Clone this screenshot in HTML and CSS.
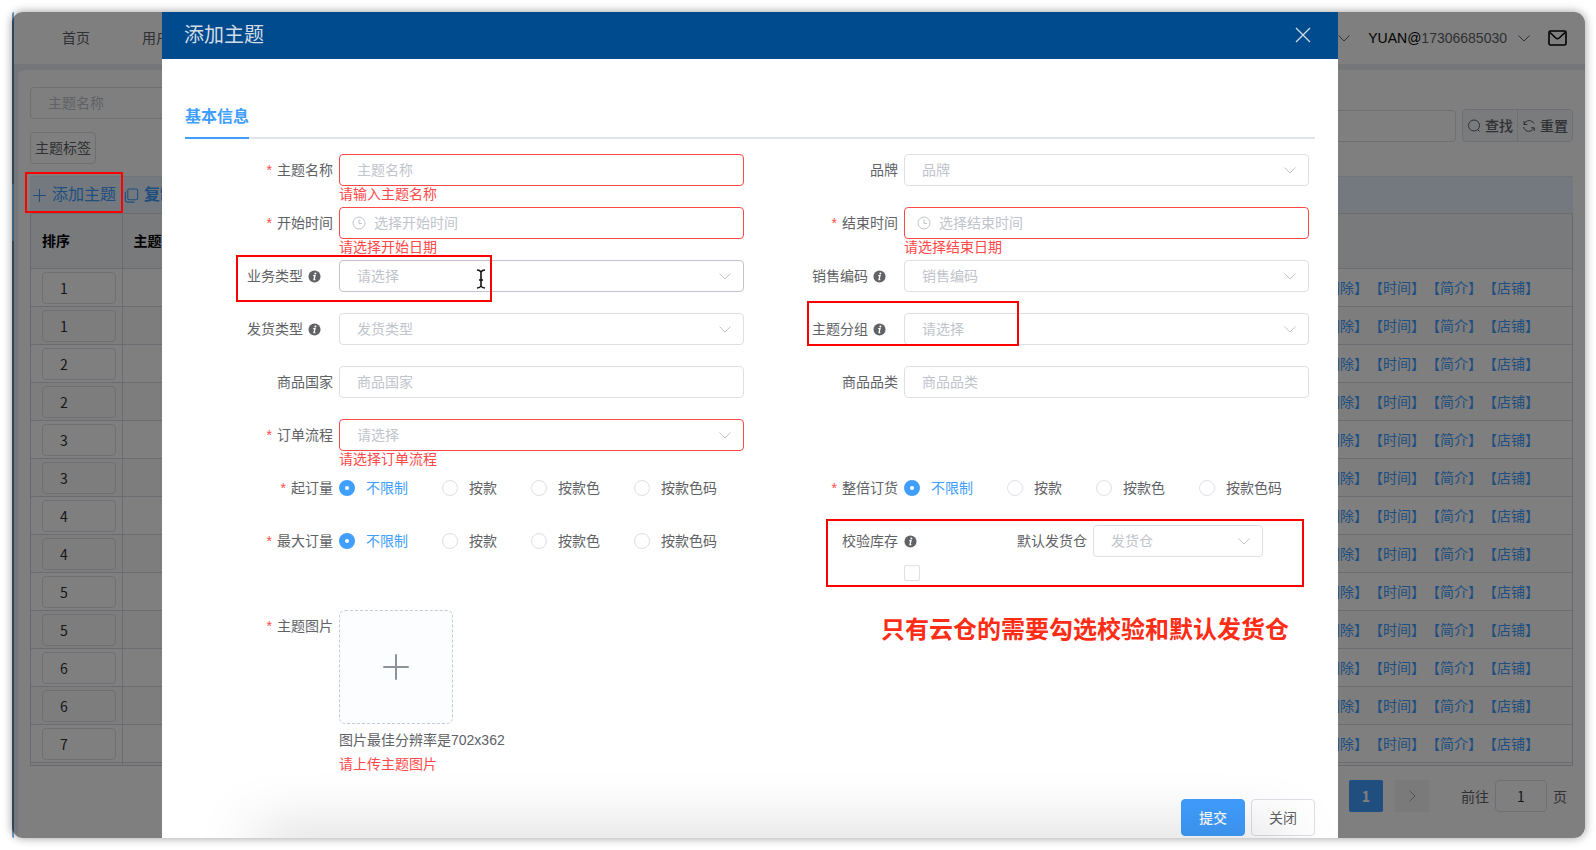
FILE: index.html
```html
<!DOCTYPE html>
<html lang="zh-CN">
<head>
<meta charset="utf-8">
<title>添加主题</title>
<link rel="stylesheet" href="styles.css">
</head>
<body>
<svg class="sprite" aria-hidden="true">
  <symbol id="chevron" viewBox="0 0 14 14"><path d="M1.5 4.5 7 10l5.500-5.500" fill="none" stroke="currentColor"/></symbol>
  <symbol id="clock" viewBox="0 0 14 14"><circle cx="7" cy="7" r="6" fill="none" stroke="currentColor"/><path d="M7 3.500V7.500h3" fill="none" stroke="currentColor"/></symbol>
  <symbol id="info" viewBox="0 0 14 14"><circle cx="7" cy="7" r="6.500" fill="currentColor"/><circle cx="7.900" cy="3.700" r="1.100" fill="#fff"/><path d="M5.600 6h1.900l-1 4.300h1.400" fill="none" stroke="#fff" stroke-width="1.400"/></symbol>
  <symbol id="plus" viewBox="0 0 26 26"><path d="M13 1v24M1 13h24" fill="none" stroke="currentColor" stroke-width="2" stroke-linecap="round"/></symbol>
</svg>
<div class="window">
  <div class="sidebar"><span class="sidebar-active"></span></div>
  <div class="app">
    <header class="topbar">
      <nav class="nav"><a href="#">首页</a><a href="#">用户</a></nav>
      <div class="account">
        <svg class="chev"><use href="#chevron"/></svg>
        <span class="user"><b>YUAN@</b>17306685030</span>
        <svg class="chev"><use href="#chevron"/></svg>
        <svg class="mail" viewBox="0 0 19 16"><rect x="1" y="1" width="17" height="14" rx="1.500" fill="none" stroke="currentColor" stroke-width="1.600"/><path d="M2 2.500 7.800 8q1.700 1.400 3.400 0L17 2.500" fill="none" stroke="currentColor" stroke-width="1.600"/></svg>
      </div>
    </header>
    <main class="panel">
      <div class="search">
        <div class="search-left">
          <input class="input" type="text" placeholder="主题名称" aria-label="主题名称">
          <button class="tag" type="button">主题标签</button>
        </div>
        <input class="input search-mid" type="text" aria-label="筛选">
        <div class="search-buttons">
          <button type="button"><svg viewBox="0 0 14 14"><circle cx="7" cy="6.500" r="5.500" fill="none" stroke="currentColor"/><path d="m10.500 10.500 2 2" stroke="currentColor"/></svg>查找</button><button type="button"><svg viewBox="0 0 14 14"><path d="M2 5.500a5.300 5.300 0 0 1 9-2.300l1 1.300M1.500 8l1.300 2.500a5.300 5.300 0 0 0 9-1.700M2 2v3.500h3.300M12.300 12V8.800H9" fill="none" stroke="currentColor"/></svg>重置</button>
        </div>
      </div>
      <div class="toolbar">
        <button type="button"><svg viewBox="0 0 14 14"><path d="M7 1v12M1 7h12" stroke="currentColor"/></svg>添加主题</button>
        <button type="button"><svg viewBox="0 0 16 16"><rect x="4" y="1" width="10.500" height="11.500" rx="1.500" fill="none" stroke="currentColor" stroke-width="1.200"/><path d="M1.500 4v9q0 2 2 2H11" fill="none" stroke="currentColor" stroke-width="1.200"/></svg><b>复制</b></button>
        <span class="mark mark-add"></span>
      </div>
      <div class="table-wrap">
        <table>
          <thead><tr><th class="sort">排序</th><th>主题</th><th class="ops"></th></tr></thead>
          <tbody>
            <tr><td><input aria-label="排序" value="1"></td><td></td><td class="ops"><a href="#">【删除】</a><a href="#">【时间】</a><a href="#">【简介】</a><a href="#">【店铺】</a></td></tr>
            <tr><td><input aria-label="排序" value="1"></td><td></td><td class="ops"><a href="#">【删除】</a><a href="#">【时间】</a><a href="#">【简介】</a><a href="#">【店铺】</a></td></tr>
            <tr><td><input aria-label="排序" value="2"></td><td></td><td class="ops"><a href="#">【删除】</a><a href="#">【时间】</a><a href="#">【简介】</a><a href="#">【店铺】</a></td></tr>
            <tr><td><input aria-label="排序" value="2"></td><td></td><td class="ops"><a href="#">【删除】</a><a href="#">【时间】</a><a href="#">【简介】</a><a href="#">【店铺】</a></td></tr>
            <tr><td><input aria-label="排序" value="3"></td><td></td><td class="ops"><a href="#">【删除】</a><a href="#">【时间】</a><a href="#">【简介】</a><a href="#">【店铺】</a></td></tr>
            <tr><td><input aria-label="排序" value="3"></td><td></td><td class="ops"><a href="#">【删除】</a><a href="#">【时间】</a><a href="#">【简介】</a><a href="#">【店铺】</a></td></tr>
            <tr><td><input aria-label="排序" value="4"></td><td></td><td class="ops"><a href="#">【删除】</a><a href="#">【时间】</a><a href="#">【简介】</a><a href="#">【店铺】</a></td></tr>
            <tr><td><input aria-label="排序" value="4"></td><td></td><td class="ops"><a href="#">【删除】</a><a href="#">【时间】</a><a href="#">【简介】</a><a href="#">【店铺】</a></td></tr>
            <tr><td><input aria-label="排序" value="5"></td><td></td><td class="ops"><a href="#">【删除】</a><a href="#">【时间】</a><a href="#">【简介】</a><a href="#">【店铺】</a></td></tr>
            <tr><td><input aria-label="排序" value="5"></td><td></td><td class="ops"><a href="#">【删除】</a><a href="#">【时间】</a><a href="#">【简介】</a><a href="#">【店铺】</a></td></tr>
            <tr><td><input aria-label="排序" value="6"></td><td></td><td class="ops"><a href="#">【删除】</a><a href="#">【时间】</a><a href="#">【简介】</a><a href="#">【店铺】</a></td></tr>
            <tr><td><input aria-label="排序" value="6"></td><td></td><td class="ops"><a href="#">【删除】</a><a href="#">【时间】</a><a href="#">【简介】</a><a href="#">【店铺】</a></td></tr>
            <tr><td><input aria-label="排序" value="7"></td><td></td><td class="ops"><a href="#">【删除】</a><a href="#">【时间】</a><a href="#">【简介】</a><a href="#">【店铺】</a></td></tr>
            <tr><td><input aria-label="排序"></td><td></td><td class="ops"></td></tr>
          </tbody>
        </table>
      </div>
      <div class="pager">
        <button class="page current" type="button">1</button>
        <button class="page next" type="button" aria-label="下一页"><svg viewBox="0 0 14 14"><path d="m4.500 1.500 5.500 5.500-5.500 5.500" fill="none" stroke="currentColor"/></svg></button>
        <label class="jump">前往<input type="text" value="1">页</label>
      </div>
    </main>
  </div>

  <div class="overlay">
    <section class="dialog" role="dialog" aria-label="添加主题">
      <header class="dialog-head">
        <h1>添加主题</h1>
        <button type="button" aria-label="关闭对话框"><svg viewBox="0 0 16 16"><path d="m1 1 14 14M15 1 1 15" stroke="currentColor" stroke-width="1.300"/></svg></button>
      </header>
      <div class="dialog-body">
        <div class="tabs"><button class="tab" type="button">基本信息</button></div>
        <form class="form">
          <div class="item">
            <label class="label required" for="name">主题名称</label>
            <div class="field invalid"><input class="input" id="name" type="text" placeholder="主题名称"><p class="error">请输入主题名称</p></div>
          </div>
          <div class="item">
            <label class="label" for="brand">品牌</label>
            <div class="field"><div class="select"><select id="brand"><option>品牌</option></select><svg><use href="#chevron"/></svg></div></div>
          </div>
          <div class="item">
            <label class="label required" for="start">开始时间</label>
            <div class="field invalid"><div class="date"><svg><use href="#clock"/></svg><input class="input" id="start" type="text" placeholder="选择开始时间"></div><p class="error">请选择开始日期</p></div>
          </div>
          <div class="item">
            <label class="label required" for="end">结束时间</label>
            <div class="field invalid"><div class="date"><svg><use href="#clock"/></svg><input class="input" id="end" type="text" placeholder="选择结束时间"></div><p class="error">请选择结束日期</p></div>
          </div>
          <div class="item">
            <label class="label hinted" for="biz">业务类型<svg class="info"><use href="#info"/></svg></label>
            <div class="field"><div class="select hover"><select id="biz"><option>请选择</option></select><svg><use href="#chevron"/></svg></div></div>
            <span class="mark mark-biz"></span>
            <svg class="cursor" viewBox="0 0 10 20"><path d="M1 1q3 0 4 2 1-2 4-2M1 19q3 0 4-2 1 2 4 2M5 3v14M3 11h4" fill="none" stroke="#111" stroke-width="1.600"/></svg>
          </div>
          <div class="item">
            <label class="label hinted" for="code">销售编码<svg class="info"><use href="#info"/></svg></label>
            <div class="field"><div class="select"><select id="code"><option>销售编码</option></select><svg><use href="#chevron"/></svg></div></div>
          </div>
          <div class="item">
            <label class="label hinted" for="ship">发货类型<svg class="info"><use href="#info"/></svg></label>
            <div class="field"><div class="select"><select id="ship"><option>发货类型</option></select><svg><use href="#chevron"/></svg></div></div>
          </div>
          <div class="item">
            <label class="label hinted" for="group">主题分组<svg class="info"><use href="#info"/></svg></label>
            <div class="field"><div class="select"><select id="group"><option>请选择</option></select><svg><use href="#chevron"/></svg></div></div>
            <span class="mark mark-group"></span>
          </div>
          <div class="item">
            <label class="label" for="country">商品国家</label>
            <div class="field"><input class="input" id="country" type="text" placeholder="商品国家"></div>
          </div>
          <div class="item">
            <label class="label" for="category">商品品类</label>
            <div class="field"><input class="input" id="category" type="text" placeholder="商品品类"></div>
          </div>
          <div class="item first-col">
            <label class="label required" for="flow">订单流程</label>
            <div class="field invalid"><div class="select"><select id="flow"><option>请选择</option></select><svg><use href="#chevron"/></svg></div><p class="error">请选择订单流程</p></div>
          </div>
          <div class="item first-col">
            <span class="label required">起订量</span>
            <div class="radios">
              <label><input type="radio" name="min" checked><span>不限制</span></label>
              <label><input type="radio" name="min"><span>按款</span></label>
              <label><input type="radio" name="min"><span>按款色</span></label>
              <label><input type="radio" name="min"><span>按款色码</span></label>
            </div>
          </div>
          <div class="item">
            <span class="label required">整倍订货</span>
            <div class="radios">
              <label><input type="radio" name="mult" checked><span>不限制</span></label>
              <label><input type="radio" name="mult"><span>按款</span></label>
              <label><input type="radio" name="mult"><span>按款色</span></label>
              <label><input type="radio" name="mult"><span>按款色码</span></label>
            </div>
          </div>
          <div class="item">
            <span class="label required">最大订量</span>
            <div class="radios">
              <label><input type="radio" name="max" checked><span>不限制</span></label>
              <label><input type="radio" name="max"><span>按款</span></label>
              <label><input type="radio" name="max"><span>按款色</span></label>
              <label><input type="radio" name="max"><span>按款色码</span></label>
            </div>
          </div>
          <div class="item">
            <label class="label" for="stock">校验库存</label>
            <div class="field stock">
              <div class="stock-line"><svg class="info"><use href="#info"/></svg><label class="depot-label" for="depot">默认发货仓</label><div class="select depot"><select id="depot"><option>发货仓</option></select><svg><use href="#chevron"/></svg></div></div>
              <div class="check-line"><input id="stock" type="checkbox"></div>
            </div>
            <span class="mark mark-stock"></span>
          </div>
          <div class="item">
            <label class="label required" for="upload">主题图片</label>
            <div class="field">
              <button class="upload" id="upload" type="button" aria-label="上传主题图片"><svg><use href="#plus"/></svg></button>
              <p class="hint">图片最佳分辨率是702x362</p>
              <p class="error">请上传主题图片</p>
            </div>
          </div>
          <p class="note">只有云仓的需要勾选校验和默认发货仓</p>
        </form>
      </div>
      <footer class="dialog-foot">
        <button class="btn primary" type="button">提交</button>
        <button class="btn" type="button">关闭</button>
      </footer>
      <div class="shade"></div>
    </section>
  </div>
</div>
</body>
</html>
```

FILE: styles.css
```css
* { box-sizing: border-box; }
body {
  margin: 0;
  padding: 12px 11px 12px 12px;
  min-height: 100vh;
  display: flex;
  background: #fff;
  color: #606266;
  font: 14px/20px "Liberation Sans", "Noto Sans CJK SC", sans-serif;
}
button, input, select { font: inherit; color: inherit; margin: 0; }
button { padding: 0; border: 0; background: none; }
a { color: inherit; text-decoration: none; }
p, h1 { margin: 0; }
svg { flex: none; width: 14px; height: 14px; }
.sprite { position: absolute; width: 0; height: 0; }

.window {
  position: relative;
  flex: 1;
  display: flex;
  height: calc(100vh - 24px);
  border-radius: 11px;
  box-shadow: 0 0 10px rgba(0, 0, 0, .4);
}
.sidebar { width: 2px; padding-top: 172px; background: #5f8bb5; border-radius: 11px 0 0 11px; }
.sidebar-active { display: block; height: 57px; background: #7fbfff; }
.app { flex: 1; min-width: 0; display: flex; flex-direction: column; background: #e8edf3; border-radius: 10px; overflow: hidden; }

.topbar { height: 52px; margin-bottom: 6px; display: flex; align-items: center; justify-content: space-between; padding: 0 18px 0 48px; background: #fff; }
.nav { display: flex; gap: 52px; }
.account { display: flex; align-items: center; }
.account .chev { color: #606266; }
.user { margin: 0 10px 0 17px; }
.user b { color: #000; font-weight: 400; }
.mail { width: 19px; height: 16px; margin-left: 17px; color: #000; }

.panel { flex: 1; min-height: 0; display: flex; flex-direction: column; margin-left: 4px; padding: 17px 12px 26px; background: #fff; border-radius: 6px 0 0 0; }
.input { width: 100%; height: 32px; padding: 0 17px; border: 1px solid #dcdfe6; border-radius: 4px; background: #fff; }
.input::placeholder { color: #c0c4cc; opacity: 1; }
.search { display: flex; align-items: center; gap: 6px; margin-bottom: 12px; }
.search-left { flex: 1; display: flex; flex-direction: column; align-items: flex-start; gap: 13px; }
.tag { width: 66px; height: 32px; border: 1px solid #dcdfe6; border-radius: 4px; }
.search-mid { flex: 1; }
.search-buttons { display: flex; border: 1px solid #dcdfe6; border-radius: 4px; background: #f5f7fa; }
.search-buttons button { display: flex; align-items: center; gap: 4px; height: 31px; padding: 0 4px; font-weight: 500; }
.search-buttons button + button { border-left: 1px solid #dcdfe6; }

.toolbar { position: relative; display: flex; align-items: center; gap: 8px; height: 37px; padding-left: 2px; background: #e6f2fc; color: #409eff; font-size: 16px; border-top: 1px solid #dfe6ec; }
.toolbar button { display: flex; align-items: center; gap: 5px; }
.toolbar button svg { width: 15px; height: 15px; }
.toolbar b { font-weight: 700; }
.table-wrap { flex: 1; min-height: 0; overflow: hidden; border: solid #ccd3e0; border-width: 0 1px 1px; }
table { width: 100%; border-collapse: collapse; }
th { height: 55px; padding: 0 11px; text-align: left; color: #000; background: #f1f5f9; font-weight: 700; }
th, td { border: 1px solid #d4d9e4; }
tr > :first-child { border-left: 0; }
tr > :last-child { border-right: 0; }
td { height: 38px; padding: 0 5px 0 11px; }
tbody tr:nth-child(even) { background: #fafafa; }
.sort { width: 91px; }
.ops { width: 320px; padding-right: 33px; text-align: right; color: #409eff; white-space: nowrap; }
td.ops a { display: inline-block; margin-left: 1px; text-spacing-trim: space-all; }
td input { display: block; width: 74px; height: 32px; padding: 0 17px; border: 1px solid #dcdfe6; border-radius: 4px; background: transparent; color: #303133; font-family: "Noto Sans CJK SC", sans-serif; }

.pager { display: flex; justify-content: flex-end; align-items: center; gap: 12px; margin-top: 14px; padding-right: 6px; font-family: "Noto Sans CJK SC", sans-serif; }
.page { width: 34px; height: 32px; display: grid; place-items: center; border-radius: 2px; background: #f4f4f5; }
.page.current { background: #409eff; color: #fff; font-weight: 700; }
.page.next { color: #a0a4aa; }
.jump { display: flex; align-items: center; gap: 6px; margin-left: 20px; }
.jump input { width: 52px; height: 32px; text-align: center; border: 1px solid #dcdfe6; border-radius: 4px; background: #fff; color: #303133; }

.overlay { position: absolute; inset: 0; display: flex; padding: 0 247px 0 150px; background: rgba(0, 0, 0, .5); border-radius: 11px; }
.dialog { position: relative; flex: 1; min-width: 0; display: flex; flex-direction: column; background: #fff; overflow: hidden; }
.dialog-head { display: flex; align-items: center; justify-content: space-between; height: 47px; padding: 0 27px 2px 22px; background: #004b8d; color: #d3dbe5; }
.dialog-head h1 { font-size: 20px; line-height: 28px; font-weight: 400; }
.dialog-head svg { display: block; width: 16px; height: 16px; }
.dialog-body { flex: 1; padding: 42px 23px 0; }
.tabs { border-bottom: 2px solid #dfe4ed; }
.tab { height: 38px; padding-bottom: 4px; margin-bottom: -2px; border-bottom: 2px solid #409eff; color: #409eff; font-size: 16px; font-weight: 700; display: block; }

.form { display: grid; grid-template-columns: 1fr 1fr; padding-top: 15px; }
.item { position: relative; display: flex; align-items: flex-start; min-height: 53px; padding-right: 6px; }
.first-col { grid-column-start: 1; }
.label { flex: none; width: 154px; padding-right: 6px; line-height: 32px; text-align: right; }
.required::before { content: "*"; color: #ff4949; margin-right: 5px; }
.hinted { display: flex; align-items: center; justify-content: flex-end; gap: 5px; padding-right: 18px; }
.info { width: 13px; height: 13px; color: #606266; }
.field { flex: 1; min-width: 0; }
.select, .date { position: relative; }
.select select { display: block; width: 100%; height: 32px; padding: 0 17px; border: 1px solid #dcdfe6; border-radius: 4px; background: #fff; color: #c0c4cc; appearance: none; }
.select svg { position: absolute; right: 12px; top: 9px; color: #c0c4cc; pointer-events: none; }
.select.hover select { border-color: #c0c4cc; }
.date svg { position: absolute; left: 13px; top: 9px; color: #c0c4cc; }
.date .input { padding-left: 34px; }
.input { display: block; }
.invalid .input, .invalid select { border-color: #ff4949; }
.error { color: #ff4949; line-height: 16px; }

.radios { display: flex; gap: 34px; height: 32px; align-items: center; }
.radios label { display: flex; align-items: center; gap: 11px; }
.radios input { appearance: none; width: 16px; height: 16px; border: 1px solid #dcdfe6; border-radius: 50%; background: #fff; }
.radios input:checked { border: 6px solid #409eff; }
.radios input:checked + span { color: #409eff; }
.stock { padding-bottom: 21px; }
.stock-line { display: flex; align-items: center; }
.depot-label { margin: 0 6px 0 100px; }
.depot { width: 170px; }
.check-line { display: flex; align-items: center; height: 32px; }
.check-line input { appearance: none; width: 16px; height: 16px; border: 1px solid #dcdfe6; border-radius: 2px; background: #fff; }
.upload { display: grid; place-items: center; width: 114px; height: 114px; border: 1px dashed #c0ccda; border-radius: 6px; background: #fbfdff; color: #8c939d; }
.upload svg { width: 26px; height: 26px; }
.hint { line-height: 32px; }
.note { padding: 4px 26px 0 0; text-align: right; color: #ff2d16; font-size: 24px; line-height: 32px; font-weight: 700; }

.dialog-foot { display: flex; justify-content: flex-end; gap: 6px; padding: 0 23px 2px; }
.btn { width: 64px; height: 37px; border: 1px solid #dcdfe6; border-radius: 4px; background: #fff; }
.btn.primary { border-color: #409eff; background: #409eff; color: #fff; font-weight: 500; }
.shade { position: absolute; left: 96px; right: 56px; top: 100%; height: 20px; box-shadow: 0 0 60px 2px rgba(0, 0, 0, .26); pointer-events: none; }

.mark { position: absolute; border: 2px solid #f00; pointer-events: none; }
.mark-add { left: -5px; top: -5px; width: 98px; height: 41px; z-index: 1; }
.mark-biz { left: 51px; top: -5px; width: 256px; height: 47px; }
.mark-group { left: 57px; top: -12px; width: 212px; height: 45px; }
.mark-stock { left: 76px; right: 11px; top: -6px; height: 68px; }
.cursor { position: absolute; left: 291px; top: 9px; width: 10px; height: 20px; }
```
